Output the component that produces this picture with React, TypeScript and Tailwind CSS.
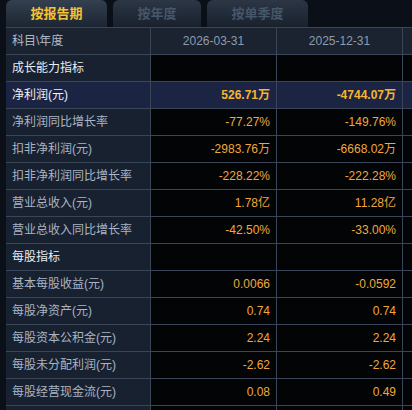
import React from "react";

type Row = {
  label: string;
  a?: string;
  b?: string;
  kind: "section" | "data" | "selected";
};

const rows: Row[] = [
  { label: "成长能力指标", kind: "section" },
  { label: "净利润(元)", a: "526.71万", b: "-4744.07万", kind: "selected" },
  { label: "净利润同比增长率", a: "-77.27%", b: "-149.76%", kind: "data" },
  { label: "扣非净利润(元)", a: "-2983.76万", b: "-6668.02万", kind: "data" },
  { label: "扣非净利润同比增长率", a: "-228.22%", b: "-222.28%", kind: "data" },
  { label: "营业总收入(元)", a: "1.78亿", b: "11.28亿", kind: "data" },
  { label: "营业总收入同比增长率", a: "-42.50%", b: "-33.00%", kind: "data" },
  { label: "每股指标", kind: "section" },
  { label: "基本每股收益(元)", a: "0.0066", b: "-0.0592", kind: "data" },
  { label: "每股净资产(元)", a: "0.74", b: "0.74", kind: "data" },
  { label: "每股资本公积金(元)", a: "2.24", b: "2.24", kind: "data" },
  { label: "每股未分配利润(元)", a: "-2.62", b: "-2.62", kind: "data" },
  { label: "每股经营现金流(元)", a: "0.08", b: "0.49", kind: "data" },
  { label: "", kind: "data" },
];

const font = { fontFamily: '"Liberation Sans", "Noto Sans CJK SC", sans-serif' };

export default function App() {
  return (
    <div className="w-[412px] h-[410px] overflow-hidden bg-[#0b1018]" style={font}>
      {/* tabs */}
      <div className="flex h-[27px] pl-[6px] gap-[6px]">
        <div className="w-[101px] h-[27px] rounded-t-[6px] bg-gradient-to-b from-[#34404f] to-[#1c2532] flex items-center justify-center text-[13px] font-bold text-[#f6c234]">
          按报告期
        </div>
        <div className="w-[88px] h-[27px] rounded-t-[6px] bg-gradient-to-b from-[#2c3645] to-[#19212d] flex items-center justify-center text-[13px] font-bold text-[#46566b]">
          按年度
        </div>
        <div className="w-[101px] h-[27px] rounded-t-[6px] bg-gradient-to-b from-[#2c3645] to-[#19212d] flex items-center justify-center text-[13px] font-bold text-[#46566b]">
          按单季度
        </div>
      </div>
      {/* table */}
      <div className="ml-[6px] border-t border-[#3a4657]">
        {/* header */}
        <div className="flex h-[27px] bg-[#1b2330] text-[12px] border-b border-[#3a4657]">
          <div className="w-[145px] shrink-0 flex items-center pl-[6px] text-[#aeb8c6] border-r border-[#3a4657]">
            科目\年度
          </div>
          <div className="w-[126px] shrink-0 flex items-center justify-center text-[#8e9bad] border-r border-[#3a4657]">
            2026-03-31
          </div>
          <div className="w-[126px] shrink-0 flex items-center justify-center text-[#8e9bad] border-r border-[#3a4657]">
            2025-12-31
          </div>
          <div className="flex-1" />
        </div>
        {rows.map((r, i) => {
          const sel = r.kind === "selected";
          const sec = r.kind === "section";
          return (
            <div
              key={i}
              className={
                "flex h-[27px] text-[12px] border-b border-[#3a4657] " +
                (sel ? "bg-[#1b2443]" : "bg-[#030405]")
              }
            >
              <div
                className={
                  "w-[145px] shrink-0 flex items-center pl-[6px] border-r border-[#3a4657] " +
                  (sel
                    ? "bg-[#1b2443] text-[#eef2f8]"
                    : sec
                    ? "bg-[#182130] text-[#e8edf4]"
                    : "bg-[#182130] text-[#aab4c2]")
                }
              >
                {r.label}
              </div>
              <div
                className={
                  "w-[126px] shrink-0 flex items-center justify-end pr-[6px] border-r border-[#3a4657] " +
                  (sel ? "font-bold text-[#f7b431]" : "text-[#f0a83a]")
                }
              >
                {r.a}
              </div>
              <div
                className={
                  "w-[126px] shrink-0 flex items-center justify-end pr-[6px] border-r border-[#3a4657] " +
                  (sel ? "font-bold text-[#f7b431]" : "text-[#f0a83a]")
                }
              >
                {r.b}
              </div>
              <div className="flex-1" />
            </div>
          );
        })}
      </div>
    </div>
  );
}
